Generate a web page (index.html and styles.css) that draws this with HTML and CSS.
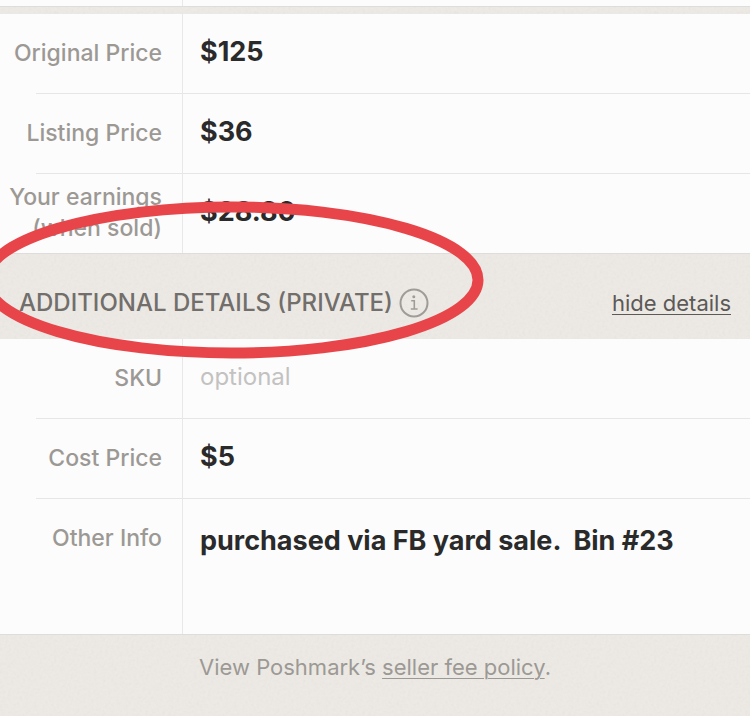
FILE: index.html
```html
<!DOCTYPE html>
<html lang="en">
<head>
    <meta charset="UTF-8">
    <meta name="viewport" content="width=device-width, initial-scale=1.0">
    <title>Edit Listing</title>
    <link rel="stylesheet" href="styles.css">
</head>
<body>

<form class="listing">
    <div class="row-end"></div>
    <div class="divider"></div>

    <div class="fields">
        <div class="row">
            <label for="originalPrice">Original Price</label>
            <div class="value"><input type="text" id="originalPrice" value="$125"></div>
        </div>
        <div class="row">
            <label for="listingPrice">Listing Price</label>
            <div class="value"><input type="text" id="listingPrice" value="$36"></div>
        </div>
        <div class="row">
            <label for="earnings">Your earnings<br>(when sold)</label>
            <div class="value"><output id="earnings">$28.80</output></div>
        </div>
    </div>

    <div class="section-header">
        <h2>ADDITIONAL DETAILS (PRIVATE)</h2>
        <button type="button" class="info" aria-label="About additional details">
            <svg width="30" height="30" viewBox="0 0 30 30" fill="none" stroke="#9f9c98">
                <circle cx="15" cy="15" r="13.5" stroke-width="2"/>
                <circle cx="14.8" cy="8.8" r="1.5" fill="#9f9c98" stroke="none"/>
                <path d="M12.2 12.8H15.3V21M11.8 21H18.6" stroke-width="1.6"/>
            </svg>
        </button>
        <a href="#" class="toggle">hide details</a>
        <svg class="marker" width="506" height="160" viewBox="0 0 506 160" fill="none" aria-hidden="true">
            <ellipse cx="253" cy="80" rx="246" ry="73" stroke="#e8454a" stroke-width="11"/>
        </svg>
    </div>

    <div class="fields">
        <div class="row">
            <label for="sku">SKU</label>
            <div class="value"><input type="text" id="sku" class="light" placeholder="optional"></div>
        </div>
        <div class="row">
            <label for="costPrice">Cost Price</label>
            <div class="value"><input type="text" id="costPrice" value="$5"></div>
        </div>
        <div class="row tall">
            <label for="otherInfo">Other Info</label>
            <div class="value"><textarea id="otherInfo" rows="2">purchased via FB yard sale.  Bin #23</textarea></div>
        </div>
    </div>

    <p class="policy">View Poshmark’s <a href="#">seller fee policy</a>.</p>
</form>

</body>
</html>
```
FILE: styles.css
```css
* {
    margin: 0;
    padding: 0;
    box-sizing: border-box;
    font-family: Inter, "Open Sans", sans-serif;
}

body {
    min-height: 100vh;
    background-color: #edeae5;
    /* paper grain */
    background-image: url("data:image/svg+xml,%3Csvg xmlns='http://www.w3.org/2000/svg' width='200' height='200'%3E%3Cfilter id='n'%3E%3CfeTurbulence type='fractalNoise' baseFrequency='.35' numOctaves='2' stitchTiles='stitch'/%3E%3CfeColorMatrix type='saturate' values='0'/%3E%3C/filter%3E%3Crect width='200' height='200' filter='url(%23n)' opacity='.08'/%3E%3C/svg%3E");
    overflow-x: hidden;
}

.row-end {
    height: 6px;
    background: linear-gradient(#e8e8e8, #e8e8e8) 182px 0 / 1px 100% no-repeat #fcfcfc;
}

.divider {
    height: 8px;
    border-top: 1px solid #dfdddb;
}

.fields {
    background: #fcfcfc;
}

.row {
    position: relative;
    display: grid;
    grid-template-columns: 182px 1fr;
    min-height: 80px;
}

.row:not(:last-child)::after {
    content: "";
    position: absolute;
    left: 36px;
    right: 0;
    bottom: 0;
    border-bottom: 1px solid #e6e6e6;
}

.row:last-child {
    min-height: 79px;
}

.row label {
    align-self: center;
    padding: 0 20px 2px 0;
    text-align: right;
    white-space: nowrap;
    font-size: 23px;
    line-height: 31px;
    font-weight: 500;
    color: #9c9995;
}

.value {
    display: flex;
    align-items: center;
    border-left: 1px solid #e8e8e8;
    padding: 0 17px 4px;
}

.value input,
.value output,
.value textarea {
    width: 100%;
    border: none;
    outline: none;
    background: transparent;
    resize: none;
    font-size: 27px;
    line-height: 36px;
    font-weight: 700;
    color: #2a2a2a;
}

.value .light {
    font-size: 24px;
    font-weight: 400;
}

.value input::placeholder {
    color: #c3c2c1;
}

.row.tall {
    min-height: 135px;
}

.tall label {
    align-self: start;
    padding-top: 24px;
}

.tall .value {
    align-items: flex-start;
    padding-top: 24px;
}

.section-header {
    position: relative;
    display: flex;
    align-items: center;
    height: 86px;
    padding: 12px 19px 0;
    border-top: 1px solid #dfdddb;
}

.section-header h2 {
    font-size: 24px;
    line-height: 30px;
    font-weight: 500;
    color: #716e6b;
}

.info {
    display: flex;
    margin-left: 6px;
    border: none;
    background: none;
    cursor: pointer;
}

.toggle {
    margin-left: auto;
    font-size: 22px;
    line-height: 30px;
    color: #5c5957;
    text-decoration-thickness: 1px;
    text-underline-offset: 3px;
}

/* red ring drawn over the section title */
.marker {
    position: absolute;
    left: -21px;
    top: -54px;
    z-index: 1;
    pointer-events: none;
}

.policy {
    padding: 16px 20px 32px;
    border-top: 1px solid #dfdddb;
    text-align: center;
    font-size: 22px;
    line-height: 32px;
    color: #9c9995;
}

.policy a {
    color: inherit;
    text-decoration-thickness: 1px;
    text-underline-offset: 3px;
}
```
